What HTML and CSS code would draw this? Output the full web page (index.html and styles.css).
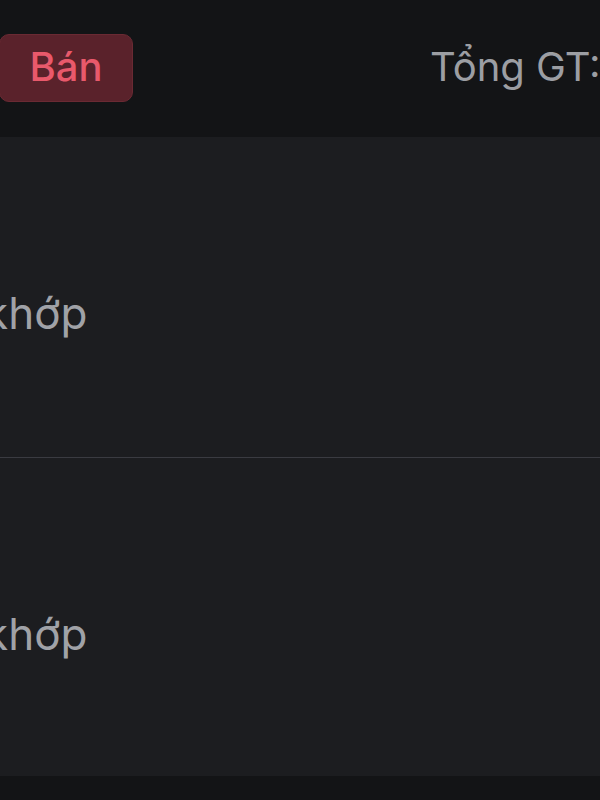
FILE: index.html
```html
<!doctype html>
<html lang="vi">
	<head>
		<title>Lệnh bán</title>
		<meta charset="utf-8">
		<meta name="viewport" content="width=device-width, user-scalable=no, minimum-scale=1.0, maximum-scale=1.0">
		<link rel="stylesheet" href="styles.css">
	</head>

	<body>
		<div class="toolbar">
			<div class="side-btn">Bán</div>
			<div class="total">Tổng GT:</div>
		</div>

		<div class="orders">
			<div class="order-row">
				<span class="status">khớp</span>
			</div>
			<div class="order-row">
				<span class="status">khớp</span>
			</div>
		</div>

		<div class="footer"></div>
	</body>
</html>
```

FILE: styles.css
```css
html, body {
	width:100%;
	height:100%;
	margin:0;
	padding:0;
	overflow:hidden;
	background:#131416;
	font-family:Inter, "Noto Sans", sans-serif;
}

body {
	display:flex;
	flex-direction:column;
}

.toolbar {
	height:137px;
	display:flex;
	align-items:center;
	justify-content:space-between;
	background:#131416;
	padding-bottom:2px;
	box-sizing:border-box;
}

.side-btn {
	width:134px;
	height:68px;
	margin-left:-1px;
	display:flex;
	align-items:center;
	justify-content:center;
	box-sizing:border-box;
	background:#5a222b;
	border:1px solid #6a2a33;
	border-radius:10px;
	color:#e9596b;
	font-size:40px;
	font-weight:500;
	padding-bottom:2px;
}

.total {
	width:170px;
	white-space:nowrap;
	color:#9c9ea3;
	font-size:40px;
	padding-bottom:2px;
}

.orders {
	height:639px;
	background:#1c1d20;
	display:flex;
	flex-direction:column;
}

.order-row {
	height:320px;
	display:flex;
	align-items:center;
	padding-top:32px;
	box-sizing:border-box;
}

.order-row + .order-row {
	height:319px;
	border-top:1px solid #3a3b41;
	padding-top:34px;
}

.status {
	margin-left:-16px;
	color:#a0a2a7;
	font-size:44px;
}

.footer {
	flex:1;
	background:#131416;
}
```
